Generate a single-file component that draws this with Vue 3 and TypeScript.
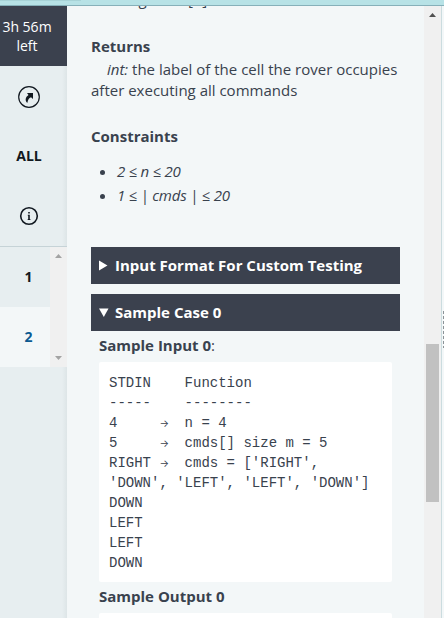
<script setup lang="ts">
interface Token {
  text: string
  arrow: boolean
}

const sampleInput: string = [
  'STDIN    Function',
  '-----    --------',
  '4     →  n = 4',
  '5     →  cmds[] size m = 5',
  "RIGHT →  cmds = ['RIGHT',",
  "'DOWN', 'LEFT', 'LEFT', 'DOWN']",
  'DOWN',
  'LEFT',
  'LEFT',
  'DOWN',
].join('\n')

const tokens: Token[] = sampleInput.split(/(→)/).map((text) => ({ text, arrow: text === '→' }))

const constraints: string[] = ['2 ≤ n ≤ 20', '1 ≤ | cmds | ≤ 20']
const questions: number[] = [1, 2]
const current = 2
</script>

<template>
  <div class="screen">
    <header class="topbar"><span class="topbar-shade"></span></header>
    <div class="body">
      <aside class="sidebar">
        <div class="timer">3h 56m<br />left</div>
        <div class="nav-item arrow-item">
          <svg width="22" height="22" viewBox="0 0 22 22">
            <circle cx="11" cy="11" r="10.3" fill="none" stroke="#111820" stroke-width="1.2" />
            <path d="M9 7H15V13L13 11.3C11 12 10 13.5 9.3 17C6.8 14.5 7.2 11.3 10.5 9Z" fill="#111820" />
          </svg>
        </div>
        <div class="nav-item all-item">ALL</div>
        <div class="nav-item info-item">
          <svg width="20" height="20" viewBox="0 0 20 20">
            <circle cx="10" cy="10" r="8.3" fill="none" stroke="#111820" stroke-width="1.6" />
            <path d="M9.2 6H10.8V7.6H9.2ZM8.8 8.8H10.8V13H11.4V14H8.7V13H9.2V9.8H8.8Z" fill="#111820" />
          </svg>
        </div>
        <div class="questions">
          <ol class="question-list">
            <li v-for="q in questions" :key="q" :class="{ active: q === current }">{{ q }}</li>
          </ol>
          <div class="side-scroll">
            <svg width="7" height="4" viewBox="0 0 7 4"><path d="M0 4L3.5 0L7 4Z" fill="#a3a3a3" /></svg>
            <svg width="7" height="4" viewBox="0 0 7 4"><path d="M0 0L3.5 4L7 0Z" fill="#a3a3a3" /></svg>
          </div>
        </div>
      </aside>

      <main class="problem">
        <p class="cut">string cmds[n]</p>
        <h3 class="returns">Returns</h3>
        <p class="desc"><em>int:</em> the label of the cell the rover occupies after executing all commands</p>
        <h3 class="constraints">Constraints</h3>
        <ul class="limits">
          <li v-for="c in constraints" :key="c"><em>{{ c }}</em></li>
        </ul>
        <div class="summary first">
          <svg width="10" height="11" viewBox="0 0 10 11"><path d="M0 .5L8.5 5.5L0 10.5Z" fill="#fff" /></svg>
          <span>Input Format For Custom Testing</span>
        </div>
        <div class="summary">
          <svg width="10" height="11" viewBox="0 0 10 11"><path d="M0 1.5H9.5L4.8 10Z" fill="#fff" /></svg>
          <span>Sample Case 0</span>
        </div>
        <div class="case">
          <h4><b>Sample Input 0</b>:</h4>
          <pre><span v-for="(t, i) in tokens" :key="i" :class="{ arrow: t.arrow }">{{ t.text }}</span></pre>
          <h4><b>Sample Output 0</b></h4>
          <pre class="output"></pre>
        </div>
      </main>

      <div class="main-scroll">
        <svg width="7" height="4" viewBox="0 0 7 4"><path d="M0 4L3.5 0L7 4Z" fill="#505050" /></svg>
        <div class="thumb"></div>
      </div>
      <div class="splitter"><div class="grip"></div></div>
    </div>
  </div>
</template>

<style>
body {
  overflow: hidden;
}
</style>

<style scoped>
.screen {
  display: flex;
  flex-direction: column;
  width: 444px;
  height: 618px;
  overflow: hidden;
  background: #f3f7f8;
  color: #39424e;
  font: 15px/21px "Open Sans", sans-serif;
}
.topbar {
  flex: none;
  box-sizing: border-box;
  height: 6px;
  background: #b7e2e6;
  border-bottom: 1px solid #86b0b9;
}
.topbar-shade {
  display: block;
  width: 81px;
  height: 1px;
  background: #a7d3d7;
}
.body {
  display: flex;
  flex: 1;
  min-height: 0;
}
.sidebar {
  flex: none;
  width: 67px;
  background: linear-gradient(90deg, #e7eef0 62px, #dde5e7 67px);
  color: #111820;
}
.timer {
  height: 60px;
  box-sizing: border-box;
  padding: 11px 13px 0 0;
  background: #3b414e;
  color: #fff;
  font-size: 14px;
  line-height: 19px;
  text-align: center;
}
.nav-item {
  display: flex;
  align-items: center;
  justify-content: center;
  width: 58px;
  height: 60px;
}
.arrow-item {
  height: 62px;
}
.all-item {
  height: 55px;
  font-size: 14px;
  font-weight: 700;
}
.info-item {
  box-sizing: border-box;
  height: 63px;
  padding-top: 3px;
}
.questions {
  display: flex;
  height: 120px;
  border-top: 1px solid #c6d3d7;
}
.question-list {
  width: 50px;
  margin: 0;
  padding: 0;
  list-style: none;
  font-size: 14px;
  font-weight: 700;
}
.question-list li {
  height: 60px;
  padding-left: 7px;
  box-sizing: border-box;
  background: #e7eef0;
  line-height: 60px;
  text-align: center;
}
.question-list .active {
  background: #f3f7f8;
  color: #0b5a91;
}
.side-scroll {
  display: flex;
  flex-direction: column;
  align-items: center;
  justify-content: space-between;
  width: 17px;
  box-sizing: border-box;
  padding: 7px 0;
  background: #f0f0f0;
}
.problem {
  flex: none;
  width: 357px;
  box-sizing: border-box;
  padding: 0 24px;
  overflow: hidden;
}
h3,
h4,
p,
pre {
  margin: 0;
}
h3 {
  font-size: 15px;
  line-height: 21px;
  font-weight: 700;
}
.cut {
  height: 21px;
  margin-top: -17px;
  padding-left: 16px;
}
.returns {
  margin-top: 26px;
}
.desc {
  margin-top: 2px;
  text-indent: 16px;
}
.constraints {
  margin-top: 25px;
}
.limits {
  margin: 12px 0 0;
  padding-left: 26px;
  line-height: 24px;
}
.limits em {
  letter-spacing: -0.22px;
}
.summary {
  display: flex;
  align-items: center;
  gap: 6px;
  height: 37px;
  margin-top: 10px;
  padding-left: 8px;
  background: #3b414e;
  color: #fff;
  font-weight: 700;
}
.first {
  margin-top: 40px;
}
.case {
  padding: 0 8px;
}
h4 {
  height: 31px;
  font-size: 15px;
  line-height: 29px;
  font-weight: 400;
}
pre {
  height: 220px;
  box-sizing: border-box;
  padding: 11px 10px 0;
  border-radius: 2px;
  background: #fff;
  font: 14px/20px "Liberation Mono", monospace;
}
.arrow {
  display: inline-block;
  width: 8.4px;
  height: 20px;
  vertical-align: top;
  font-family: Inter, sans-serif;
  font-size: 10px;
}
.main-scroll {
  display: flex;
  flex: none;
  flex-direction: column;
  align-items: center;
  width: 17px;
  box-sizing: border-box;
  padding-top: 7px;
  background: #f0f0f0;
}
.thumb {
  width: 13px;
  height: 158px;
  margin-top: 327px;
  background: #c1c1c1;
}
.splitter {
  flex: 1;
  border-left: 1px solid #cbdcdf;
}
.grip {
  width: 1px;
  height: 37px;
  margin: 305px 0 0 1px;
  background: repeating-linear-gradient(#8b9296 0 3px, #f3f7f8 3px 5px);
}
</style>
